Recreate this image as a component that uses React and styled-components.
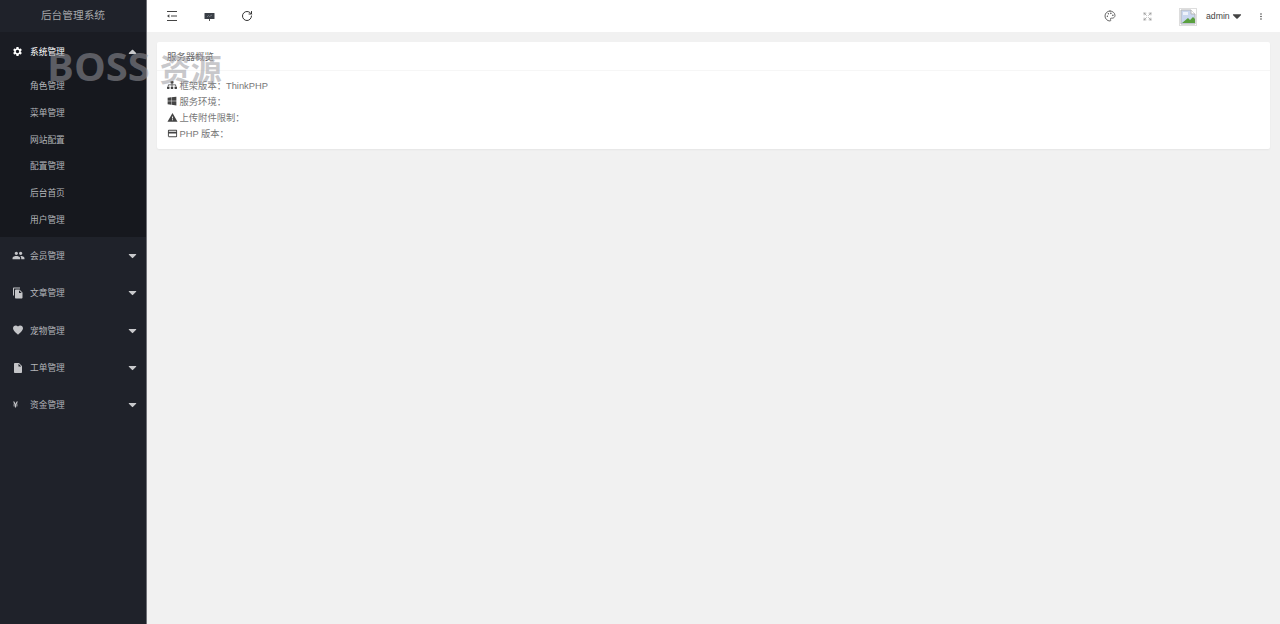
import React from 'react';
import styled, { createGlobalStyle } from 'styled-components';
import { FaCaretUp, FaCaretDown, FaSitemap, FaWindows, FaYenSign } from 'react-icons/fa';
import { MdSettings, MdPeople, MdFileCopy, MdFavorite, MdInsertDriveFile, MdWarning, MdCreditCard, MdMoreVert } from 'react-icons/md';
import { LuPalette, LuExpand, LuRotateCw } from 'react-icons/lu';

const Global = createGlobalStyle`
  html, body { margin: 0; padding: 0; height: 100%; overflow: hidden; }
  body { font-family: "Liberation Sans", "Noto Sans CJK SC", sans-serif; background: #f1f1f1; }
  #root { height: 100%; }
`;

const Page = styled.div`
  display: flex;
  height: 624px;
  width: 1280px;
  position: relative;
`;

const Sidebar = styled.aside`
  width: 147px;
  flex: none;
  box-sizing: border-box;
  border-right: 1px solid #6f7076;
  background: #1f222a;
  display: flex;
  flex-direction: column;
`;

const Logo = styled.div`
  height: 32px;
  line-height: 31px;
  text-align: center;
  color: #a6a8ab;
  font-size: 10.7px;
`;

const MenuHead = styled.div`
  height: ${p => (p.$open ? 38 : 37.3)}px;
  flex: none;
  display: flex;
  align-items: center;
  padding: 0 7px 0 12px;
  background: ${p => (p.$open ? '#1a1c23' : 'transparent')};
  color: ${p => (p.$open ? '#ffffff' : '#b4b6ba')};
  font-size: 8.7px;
`;

const MenuIcon = styled.span`
  width: 18px;
  flex: none;
  display: flex;
  align-items: center;
  font-size: ${p => p.$size || 11}px;
  color: ${p => (p.$open ? '#ffffff' : '#c4c5c8')};
`;

const MenuLabel = styled.span`
  flex: 1;
`;

const Caret = styled.span`
  display: flex;
  font-size: 13px;
  color: #c8c9cc;
`;

const SubMenu = styled.div`
  background: #16181e;
  height: 167px;
  flex: none;
  padding-top: 3.3px;
  box-sizing: border-box;
`;

const SubItem = styled.div`
  height: 26.7px;
  line-height: 26.7px;
  padding-left: 30px;
  font-size: 8.7px;
  color: #b4b6ba;
`;

const Main = styled.main`
  flex: 1;
  min-width: 0;
  display: flex;
  flex-direction: column;
`;

const TopBar = styled.header`
  height: 32px;
  flex: none;
  background: #fff;
  display: flex;
  align-items: center;
  padding: 0 14px 0 19px;
  color: #333;
`;

const ToolButton = styled.span`
  width: ${p => p.$w || 37.5}px;
  flex: none;
  display: flex;
  align-items: center;
  font-size: ${p => p.$size || 11}px;
  color: ${p => p.$color || '#333'};
`;

const Spacer = styled.div`
  flex: 1;
`;

const Avatar = styled.span`
  width: 18px;
  height: 18px;
  flex: none;
  box-sizing: border-box;
  border: 1px solid #ddd;
  display: flex;
  align-items: center;
  justify-content: center;
  margin-right: 9px;
  position: relative;
  top: 1px;
`;

const UserName = styled.span`
  font-size: 8.7px;
  color: #444;
  display: flex;
  align-items: center;
  width: 50px;
  flex: none;
`;

const Content = styled.div`
  padding: 10px;
`;

const Card = styled.section`
  background: #fff;
  border-radius: 2px;
  height: 107px;
  box-shadow: 0 1px 2px rgba(0, 0, 0, 0.05);
`;

const CardTitle = styled.div`
  height: 29px;
  line-height: 30px;
  padding-left: 10px;
  font-size: 9.4px;
  color: #666;
  border-bottom: 1px solid #f6f6f6;
  box-sizing: border-box;
`;

const CardBody = styled.div`
  padding: 6px 10px 0;
`;

const Row = styled.div`
  height: 16px;
  display: flex;
  align-items: center;
  font-size: 9.3px;
  color: #777;
`;

const RowIcon = styled.span`
  width: 12.5px;
  flex: none;
  display: flex;
  align-items: center;
  font-size: ${p => p.$size || 10}px;
  color: #444;
`;

const Watermark = styled.div`
  position: absolute;
  left: 47px;
  top: 42px;
  display: flex;
  align-items: baseline;
  gap: 10px;
  font-family: "Open Sans", "Noto Sans CJK SC", sans-serif;
  font-weight: 700;
  line-height: 48px;
  color: rgba(152, 152, 158, 0.53);
  pointer-events: none;
  white-space: nowrap;
`;

const WatermarkLatin = styled.span`
  font-size: 40px;
`;

const WatermarkCjk = styled.span`
  font-size: 31px;
  font-family: "Noto Sans CJK SC", sans-serif;
`;

const BrokenImage = () => (
  <svg width="16" height="16" viewBox="0 0 16 16">
    <path d="M1 1h10l4 4v10H1z" fill="#c9d6ee" stroke="#b5b5b5" strokeWidth="1" />
    <path d="M2 14l6-5 2 2 3-3 2 2v4H2z" fill="#5aa03e" />
    <path d="M11 1v4h4" fill="#fff" stroke="#b5b5b5" />
    <path d="M3 3h5v3H3z" fill="#eef2fa" />
  </svg>
);

const OutdentIcon = () => (
  <svg width="12" height="12" viewBox="0 0 12 12" fill="none" stroke="#444" strokeWidth="1.1">
    <path d="M1 1.5h10M5 6h6M1 10.5h10" />
    <path d="M3.4 4.2v3.6L1 6z" fill="#444" stroke="none" />
  </svg>
);

const BoardIcon = () => (
  <svg width="11" height="11" viewBox="0 0 11 11">
    <rect x="0.5" y="2" width="10" height="6" rx="0.5" fill="#3a3f46" />
    <path d="M3 6l1.5-1.5 1 1L8 4" stroke="#8a8f96" strokeWidth="0.7" fill="none" />
    <path d="M5.5 8v2" stroke="#555" strokeWidth="1" />
  </svg>
);

const subItems = ['角色管理', '菜单管理', '网站配置', '配置管理', '后台首页', '用户管理'];
const menus = [
  { label: '会员管理', Icon: MdPeople, size: 13 },
  { label: '文章管理', Icon: MdFileCopy, size: 12 },
  { label: '宠物管理', Icon: MdFavorite, size: 12 },
  { label: '工单管理', Icon: MdInsertDriveFile, size: 12 },
  { label: '资金管理', Icon: FaYenSign, size: 7 },
];

const rows = [
  { Icon: FaSitemap, text: '框架版本：ThinkPHP' },
  { Icon: FaWindows, text: '服务环境：' },
  { Icon: MdWarning, text: '上传附件限制：', size: 11 },
  { Icon: MdCreditCard, text: 'PHP 版本：', size: 11 },
];

export default function App() {
  return (
    <Page>
      <Global />
      <Sidebar>
        <Logo>后台管理系统</Logo>
        <MenuHead $open>
          <MenuIcon $open><MdSettings /></MenuIcon>
          <MenuLabel>系统管理</MenuLabel>
          <Caret><FaCaretUp /></Caret>
        </MenuHead>
        <SubMenu>
          {subItems.map(s => <SubItem key={s}>{s}</SubItem>)}
        </SubMenu>
        {menus.map(({ label, Icon, size }) => (
          <MenuHead key={label}>
            <MenuIcon $size={size}><Icon /></MenuIcon>
            <MenuLabel>{label}</MenuLabel>
            <Caret><FaCaretDown /></Caret>
          </MenuHead>
        ))}
      </Sidebar>
      <Main>
        <TopBar>
          <ToolButton><OutdentIcon /></ToolButton>
          <ToolButton><BoardIcon /></ToolButton>
          <ToolButton $size={12}><LuRotateCw /></ToolButton>
          <Spacer />
          <ToolButton $w={39} $size={12} $color="#666"><LuPalette /></ToolButton>
          <ToolButton $w={36} $size={9} $color="#999"><LuExpand /></ToolButton>
          <Avatar><BrokenImage /></Avatar>
          <UserName>admin<FaCaretDown size={14} /></UserName>
          <ToolButton $w={10} $size={11} $color="#444"><MdMoreVert /></ToolButton>
        </TopBar>
        <Content>
          <Card>
            <CardTitle>服务器概览</CardTitle>
            <CardBody>
              {rows.map(({ Icon, text, size }) => (
                <Row key={text}>
                  <RowIcon $size={size}><Icon /></RowIcon>
                  {text}
                </Row>
              ))}
            </CardBody>
          </Card>
        </Content>
      </Main>
      <Watermark>
        <WatermarkLatin>BOSS</WatermarkLatin>
        <WatermarkCjk>资源</WatermarkCjk>
      </Watermark>
    </Page>
  );
}
